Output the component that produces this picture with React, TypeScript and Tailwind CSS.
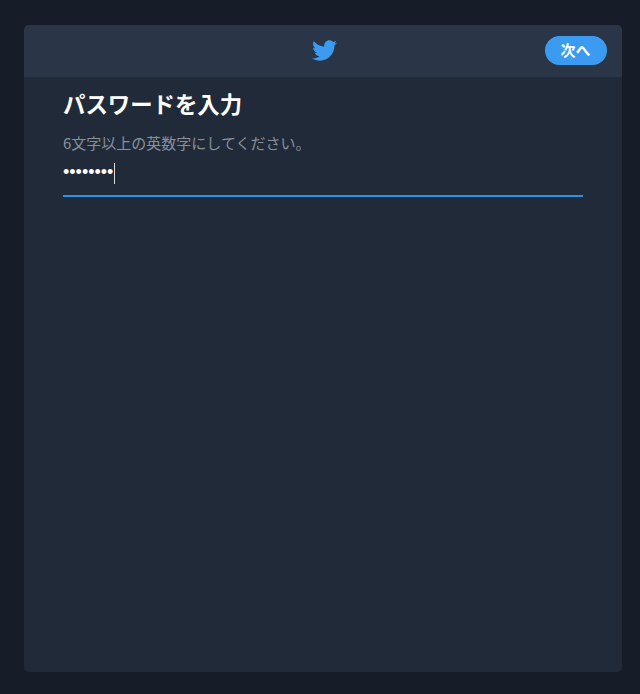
import { FaTwitter } from 'react-icons/fa';

const font = { fontFamily: '"Noto Sans CJK JP", "Liberation Sans", sans-serif' };

export default function App() {
  return (
    <div
      className="h-[694px] w-[640px] bg-[#161d28] pt-[25px] pb-[22px] pl-[24px] pr-[18px] overflow-hidden"
      style={font}
    >
      <div className="h-full flex flex-col rounded-[5px] bg-[#212a38] overflow-hidden">
        {/* Header */}
        <div className="relative h-[52px] shrink-0 bg-[#2a3547] flex items-center justify-center">
          <FaTwitter size={25} className="text-[#3a9bf0] ml-[3px] mb-[2px]" />
          <button className="absolute right-[15px] top-[11px] w-[62px] h-[29px] rounded-full bg-[#3a9bf0] text-white text-[15px] font-bold leading-none flex items-center justify-center pr-[1px] pb-[2px]">
            次へ
          </button>
        </div>

        {/* Body */}
        <div className="px-[39px] pt-[12px]">
          <h2 className="text-[22.4px] leading-[28px] font-bold text-white">パスワードを入力</h2>
          <p className="mt-[16px] text-[15px] leading-[20px] text-[#87919c]">6文字以上の英数字にしてください。</p>
          <div className="mt-[7px] h-[37px] border-b-2 border-[#2a8fe6] flex items-start">
            <span className="mt-[1px] text-[18px] leading-[22px] text-white" style={{ fontFamily: '"Liberation Sans", sans-serif' }}>••••••••</span>
            <span className="ml-[1px] mt-[3px] w-[1px] h-[21px] bg-[#d8dce0]"></span>
          </div>
        </div>
      </div>
    </div>
  );
}
